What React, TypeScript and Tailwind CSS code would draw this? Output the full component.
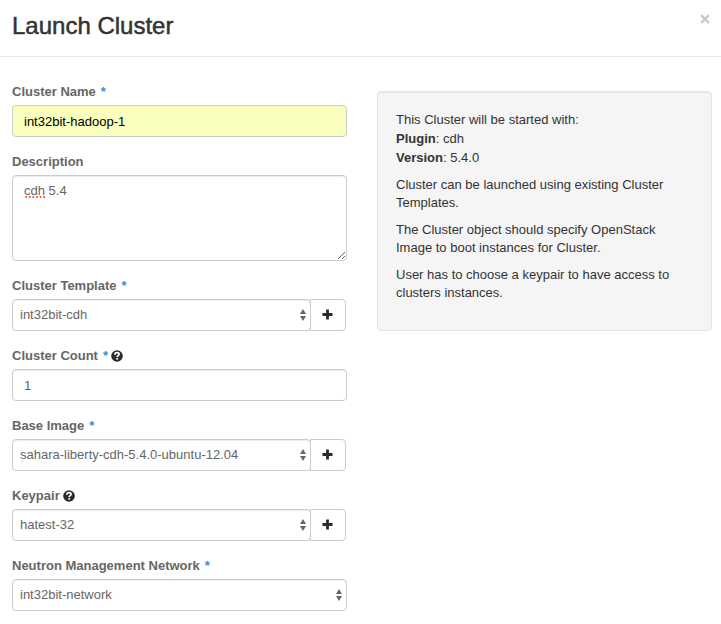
import type { ReactNode } from "react";

const controlClass =
  "block w-full rounded border border-[#cccccc] bg-white text-[13px] leading-[18px] text-[#666666] shadow-[inset_0_1px_1px_rgba(0,0,0,0.075)] outline-none focus:border-[#66afe9]";

function HelpIcon() {
  return (
    <svg viewBox="0 0 12 12" className="ml-[3px] size-3" role="img" aria-label="Help">
      <circle cx="6" cy="6" r="5.8" fill="#2b2b2b" />
      <path
        d="M3.9 4.7C3.9 3.4 4.8 2.7 6.1 2.7S8.1 3.4 8.1 4.3C8.1 5.6 6.2 5.6 6.2 7.1"
        fill="none"
        stroke="#fff"
        strokeWidth="1.7"
      />
      <path d="M5.3 7.9h1.8v1.7H5.3z" fill="#fff" />
    </svg>
  );
}

function Field({
  id,
  label,
  required,
  help,
  children,
}: {
  id: string;
  label: string;
  required?: boolean;
  help?: boolean;
  children: ReactNode;
}) {
  return (
    <div className="mb-[15px]">
      <div className="mb-[3px] flex h-5 items-center text-[13px] leading-5">
        <label htmlFor={id} className="font-bold text-[#666666]">
          {label}
          {required && <span className="ml-[5px] text-[#3b8ad8]">*</span>}
        </label>
        {help && <HelpIcon />}
      </div>
      {children}
    </div>
  );
}

function Select({ id, value }: { id: string; value: string }) {
  return (
    <div className="relative min-w-0 flex-1">
      <select id={id} className={`${controlClass} h-8 appearance-none pr-5 pl-[7px]`}>
        <option>{value}</option>
      </select>
      <svg
        viewBox="0 0 6 12"
        aria-hidden="true"
        className="pointer-events-none absolute top-2.5 right-[5px] h-3 w-1.5"
      >
        <path d="M3 0L6 5H0zM3 12L0 7H6z" fill="#666666" />
      </svg>
    </div>
  );
}

function SelectWithAdd({ id, value, addLabel }: { id: string; value: string; addLabel: string }) {
  return (
    <div className="mr-px flex">
      <Select id={id} value={value} />
      <button
        type="button"
        aria-label={addLabel}
        className="-ml-px flex h-8 w-9 items-center justify-center rounded-r border border-[#cccccc] bg-white pr-px pb-px hover:bg-[#f5f5f5]"
      >
        <svg viewBox="0 0 11 11" className="size-[11px]" aria-hidden="true">
          <path d="M5.5 0.5v10M0.5 5.5h10" stroke="#2b2b2b" strokeWidth="2.8" strokeLinecap="butt" />
        </svg>
      </button>
    </div>
  );
}

export default function App() {
  return (
    <div className="bg-white font-['Liberation_Sans',Arial,sans-serif] text-[13px] leading-[18px] text-[#333333]">
      <header className="flex h-[57px] items-start justify-between border-b border-[#e5e5e5] pt-3 pr-[11px] pl-3">
        <h1 className="text-[24px] leading-7 font-normal [-webkit-text-stroke:0.5px_#333333]">
          Launch Cluster
        </h1>
        <button type="button" aria-label="Close" className="mt-0.5 text-[#c8c8c8] hover:text-[#999999]">
          <svg viewBox="0 0 10 10" className="size-2.5" aria-hidden="true">
            <path d="M1.2 1.2l7.6 7.6M8.8 1.2L1.2 8.8" stroke="currentColor" strokeWidth="2.4" />
          </svg>
        </button>
      </header>
      <main className="grid grid-cols-2 items-start gap-[30px] pt-[25px] pr-[9px] pl-3">
        <form>
          <Field id="name" label="Cluster Name" required>
            <input
              id="name"
              type="text"
              defaultValue="int32bit-hadoop-1"
              className="block h-8 w-full rounded border border-[#cccccc] bg-[#faffbd] px-[11px] text-[13px] leading-[18px] text-black outline-none"
            />
          </Field>
          <Field id="description" label="Description">
            <div className="relative">
              <textarea
                id="description"
                defaultValue="cdh 5.4"
                className={`${controlClass} h-[86px] resize-y px-[11px] py-1.5`}
              />
              <svg
                viewBox="0 0 20 2"
                aria-hidden="true"
                className="pointer-events-none absolute top-[21px] left-[13px] h-0.5 w-5"
              >
                <path d="M1 1h19" stroke="#ff4b42" strokeWidth="2" strokeLinecap="round" strokeDasharray="0.2 3.4" />
              </svg>
            </div>
          </Field>
          <Field id="template" label="Cluster Template" required>
            <SelectWithAdd id="template" value="int32bit-cdh" addLabel="Add cluster template" />
          </Field>
          <Field id="count" label="Cluster Count" required help>
            <input id="count" type="text" defaultValue="1" className={`${controlClass} h-8 px-[11px]`} />
          </Field>
          <Field id="image" label="Base Image" required>
            <SelectWithAdd id="image" value="sahara-liberty-cdh-5.4.0-ubuntu-12.04" addLabel="Add base image" />
          </Field>
          <Field id="keypair" label="Keypair" help>
            <SelectWithAdd id="keypair" value="hatest-32" addLabel="Add keypair" />
          </Field>
          <Field id="network" label="Neutron Management Network" required>
            <Select id="network" value="int32bit-network" />
          </Field>
        </form>
        <aside className="mt-[9px] rounded border border-[#e3e3e3] bg-[#f5f5f5] px-[18px] pt-[18px] pb-[28px] shadow-[inset_0_1px_1px_rgba(0,0,0,0.05)]">
          <p className="leading-[19px]">
            This Cluster will be started with:
            <br />
            <b>Plugin</b>: cdh
            <br />
            <b>Version</b>: 5.4.0
          </p>
          <p className="mt-[9px]">Cluster can be launched using existing Cluster Templates.</p>
          <p className="mt-[9px]">
            The Cluster object should specify OpenStack Image to boot instances for Cluster.
          </p>
          <p className="mt-[9px]">User has to choose a keypair to have access to clusters instances.</p>
        </aside>
      </main>
    </div>
  );
}
